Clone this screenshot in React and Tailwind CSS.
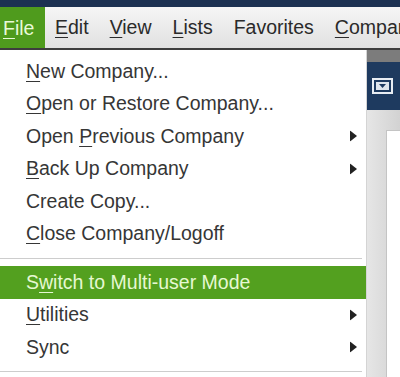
import React from 'react';

const font = { fontFamily: '"Liberation Sans", Arial, sans-serif' };

function U({ children }) {
  return <span className="underline underline-offset-[3px] decoration-1">{children}</span>;
}

function Arrow() {
  return (
    <svg width="7" height="11" viewBox="0 0 7 11" className="absolute left-[350px] top-1/2 -translate-y-1/2">
      <path d="M0 0 L7 5.5 L0 11 Z" fill="#222" />
    </svg>
  );
}

function Item({ children, arrow, active }) {
  return (
    <div
      className={`relative h-[32.5px] flex items-center pl-[26px] ${
        active ? 'bg-[#53a01f] text-[#e6f8d2]' : 'text-[#363636]'
      }`}
    >
      <span>{children}</span>
      {arrow && <Arrow />}
    </div>
  );
}

function Separator() {
  return (
    <div className="h-[16px] flex items-center">
      <div className="w-[362px] h-px bg-[#cdcdcd]" />
    </div>
  );
}

export default function App() {
  return (
    <div className="w-[400px] h-[377px] overflow-hidden bg-white text-[19.5px] leading-none" style={font}>
      <div className="h-[7px] bg-[#1c3152]" />

      {/* menu bar */}
      <div className="h-[43px] flex items-stretch overflow-hidden border-b-2 border-[#3d3d3d] bg-[linear-gradient(to_bottom,#f5f5f5,#e1e1e1)] text-[#2a2a2a] whitespace-nowrap">
        <div className="w-[45px] shrink-0 -mb-[2px] bg-[#4f9b1d] text-[#e9f9d8] flex items-center pl-[3px]">
          <U>F</U>ile
        </div>
        <div className="ml-[10px] shrink-0 flex items-center gap-[21px]">
          <span><U>E</U>dit</span>
          <span><U>V</U>iew</span>
          <span><U>L</U>ists</span>
          <span>Favorites</span>
          <span><U>C</U>ompany</span>
        </div>
      </div>

      <div className="flex h-[327px]">
        {/* file dropdown */}
        <div className="w-[367px] shrink-0 bg-white border-r border-[#d4d4d4] pt-[5px] whitespace-nowrap">
          <Item><U>N</U>ew Company...</Item>
          <Item><U>O</U>pen or Restore Company...</Item>
          <Item arrow>Open <U>P</U>revious Company</Item>
          <Item arrow><U>B</U>ack Up Company</Item>
          <Item>Create Copy...</Item>
          <Item><U>C</U>lose Company/Logoff</Item>
          <Separator />
          <Item active>S<U>w</U>itch to Multi-user Mode</Item>
          <Item arrow><U>U</U>tilities</Item>
          <Item arrow>Sync</Item>
          <Separator />
        </div>

        {/* window behind */}
        <div className="flex-1 flex flex-col">
          <div className="h-[12px] bg-[#7c7c7c]" />
          <div className="h-[48px] bg-[#1e3a5f] flex items-center pl-[5px]">
            <svg width="21" height="16" viewBox="0 0 21 16">
              <rect x="1" y="1" width="19" height="14" fill="#1e3a5f" stroke="#e8edf3" strokeWidth="2" />
              <rect x="4" y="4" width="13" height="8" fill="#dfe5ec" />
              <path d="M7 6 L14 6 L10.5 10 Z" fill="#1e3a5f" />
            </svg>
          </div>
          <div className="flex-1 bg-[linear-gradient(to_right,#e6e6e6,#d2d2d2)] pl-[19px] pt-[20px]">
            <div className="h-full bg-white border-l border-t border-[#c4c4c4]" />
          </div>
        </div>
      </div>
    </div>
  );
}
